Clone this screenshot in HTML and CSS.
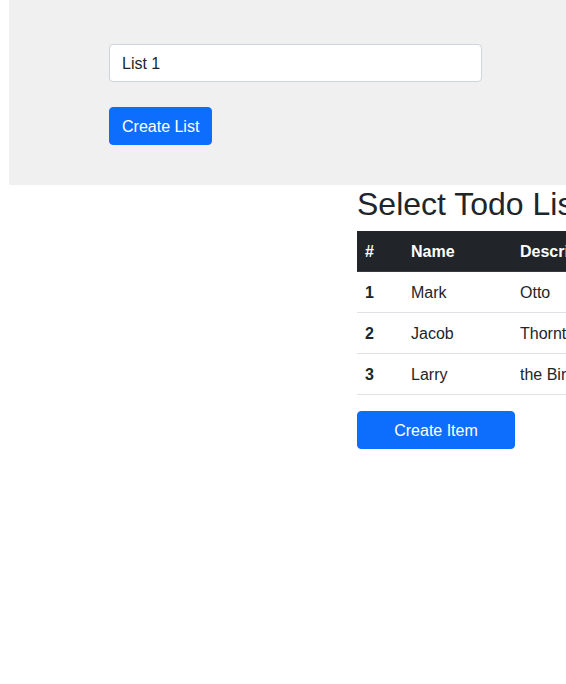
FILE: index.html
```html
<!DOCTYPE html>
<html lang="en">
<head>
  <meta charset="UTF-8">
  <meta name="viewport" content="width=device-width, initial-scale=1.0">
  <title>Todo Lists</title>
  <link rel="stylesheet" href="styles.css">
</head>
<body>
  <div class="list-panel">
    <form class="list-form">
      <input type="text" class="form-control" value="List 1">
      <button type="button" class="btn">Create List</button>
    </form>
  </div>

  <div class="todo-section">
    <h2>Select Todo List</h2>
    <table class="table">
      <thead>
        <tr>
          <th class="col-num">#</th>
          <th class="col-name">Name</th>
          <th>Description</th>
        </tr>
      </thead>
      <tbody>
        <tr>
          <th>1</th>
          <td>Mark</td>
          <td>Otto</td>
        </tr>
        <tr>
          <th>2</th>
          <td>Jacob</td>
          <td>Thornton</td>
        </tr>
        <tr>
          <th>3</th>
          <td>Larry</td>
          <td>the Bird</td>
        </tr>
      </tbody>
    </table>
    <button type="button" class="btn btn-wide">Create Item</button>
  </div>
</body>
</html>
```

FILE: styles.css
```css
/* General styles */
* {
  box-sizing: border-box;
}

body {
  margin: 0;
  font-family: 'Liberation Sans', Arial, sans-serif;
  font-size: 16px;
  line-height: 1.5;
  color: #212529;
  background: #fff;
  overflow-x: hidden;
}

/* Top panel with the list form */
.list-panel {
  margin-left: 9px;
  width: 700px;
  background-color: #f0f0f0;
  padding: 44px 0 40px 100px;
}

.list-form {
  display: flex;
  flex-direction: column;
  align-items: flex-start;
  gap: 25px;
}

.form-control {
  width: 373px;
  height: 38px;
  padding: 7px 12px 5px;
  font: inherit;
  color: #212529;
  background-color: #fff;
  border: 1px solid #ced4da;
  border-radius: 4px;
}

.btn {
  height: 38px;
  padding: 7px 12px 5px;
  font: inherit;
  color: #fff;
  background-color: #0d6efd;
  border: 1px solid #0d6efd;
  border-radius: 4px;
  cursor: pointer;
}

.btn-wide {
  width: 158px;
}

/* Todo list table */
.todo-section {
  padding-left: 357px;
}

h2 {
  margin: 0 0 8px;
  font-size: 32px;
  font-weight: 500;
  line-height: 1.2;
  white-space: nowrap;
}

.table {
  width: 420px;
  margin-bottom: 16px;
  border-collapse: collapse;
  table-layout: fixed;
}

.table th,
.table td {
  padding: 9px 8px 7px;
  text-align: left;
  border-bottom: 1px solid #dee2e6;
  white-space: nowrap;
  overflow: hidden;
}

.table thead th {
  color: #fff;
  background-color: #212529;
  border-bottom-color: #373b3e;
  font-weight: bold;
}

.col-num {
  width: 46px;
}

.col-name {
  width: 109px;
}
```
